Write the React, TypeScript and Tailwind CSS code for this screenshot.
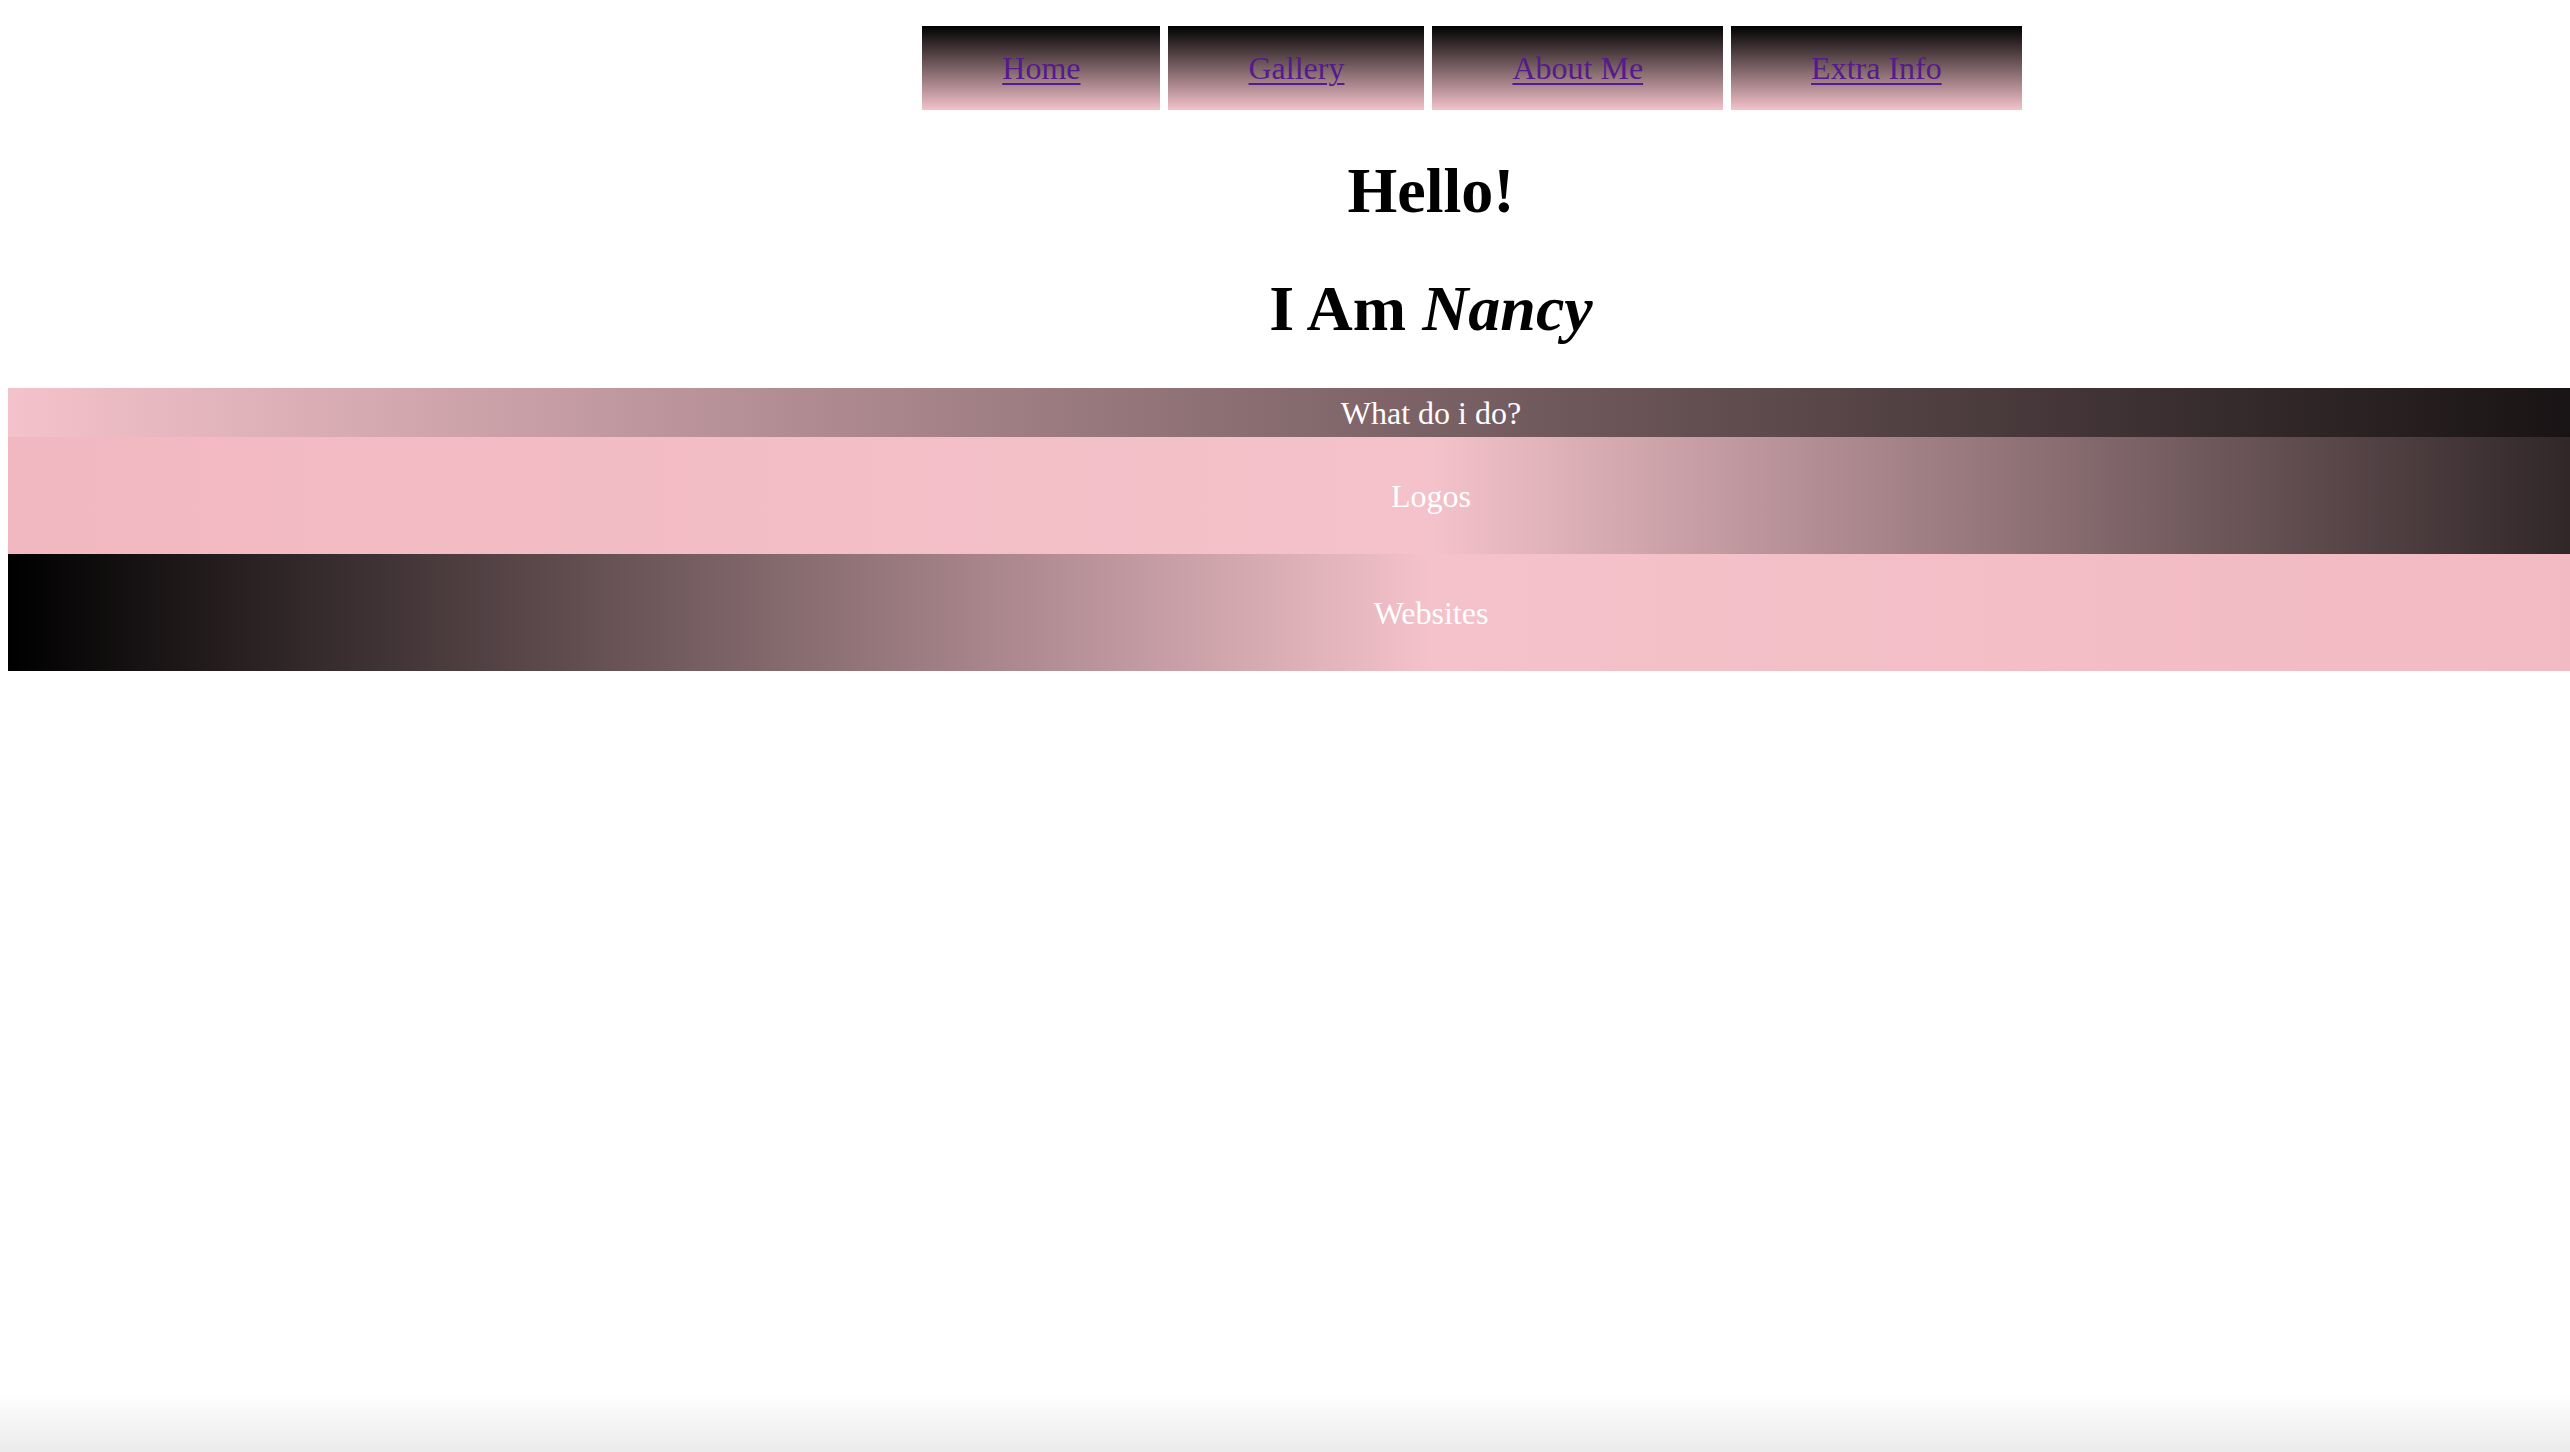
const LINKS = ["Home", "Gallery", "About Me", "Extra Info"];

export default function App() {
  return (
    <div className="relative min-h-screen w-screen overflow-hidden bg-white font-['Liberation_Serif','Times_New_Roman',serif]">
      <div className="ml-[8px] w-[2846px] pt-[26px]">
        <ul className="flex justify-center gap-[8px] pl-[82px]">
          {LINKS.map((link) => (
            <li
              key={link}
              className="flex h-[84px] items-center bg-[linear-gradient(#000,#f4c2ca)] px-[80px]"
            >
              <a
                href="#"
                className="text-[32px] leading-none text-[#551a8b] underline decoration-[2px] underline-offset-[4px]"
              >
                {link}
              </a>
            </li>
          ))}
        </ul>

        <h1 className="mt-[44px] text-center text-[64px] font-bold leading-[74px] text-black">
          Hello!
        </h1>
        <h1 className="mt-[44px] text-center text-[64px] font-bold leading-[74px] text-black">
          I Am <em className="italic">Nancy</em>
        </h1>

        <div className="mt-[42px] flex h-[49px] items-center justify-center bg-[linear-gradient(to_right,#f4c2ca,#000)] text-[32px] text-white">
          What do i do?
        </div>
        <div className="flex h-[117px] items-center justify-center bg-[linear-gradient(to_right,#f2b8c1,#f4c2ca,#000)] text-[32px] text-white">
          Logos
        </div>
        <div className="flex h-[117px] items-center justify-center bg-[linear-gradient(to_right,#000,#f4c2ca,#f2b8c1)] text-[32px] text-white">
          Websites
        </div>
      </div>

      {/* faint shade along the bottom edge */}
      <div className="pointer-events-none fixed inset-x-0 bottom-0 h-[60px] bg-[linear-gradient(to_bottom,rgba(0,0,0,0),rgba(0,0,0,0.08))]" />
    </div>
  );
}
